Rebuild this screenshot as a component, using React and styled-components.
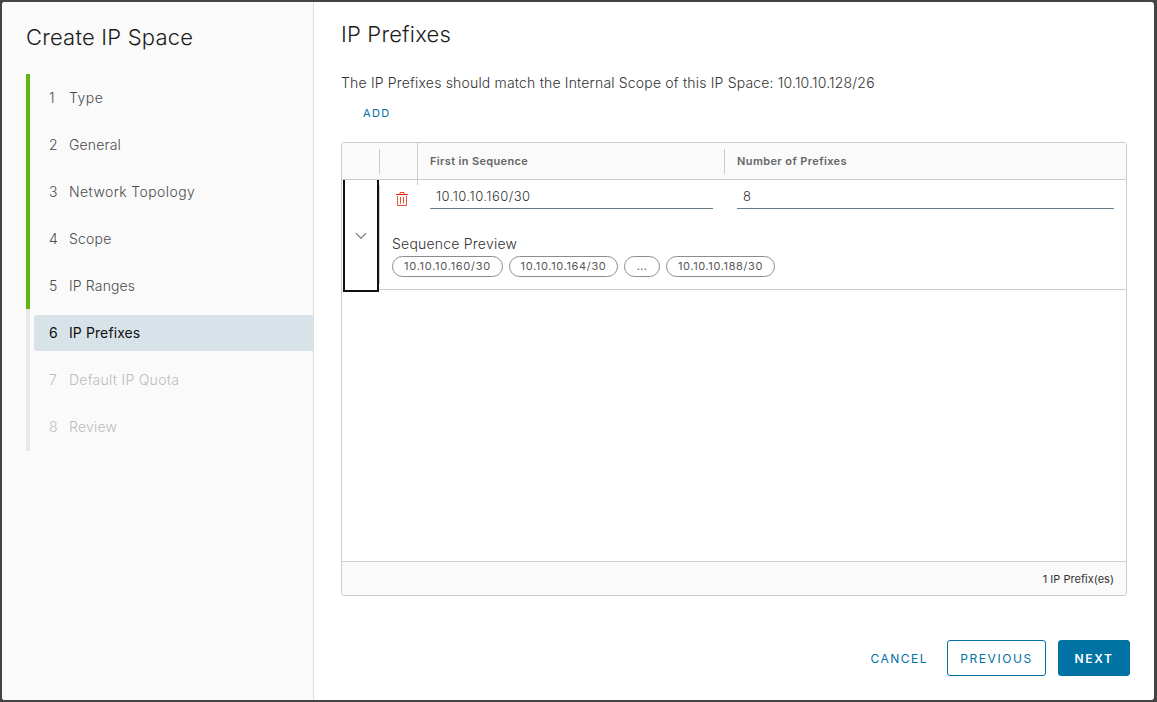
import React from 'react';
import styled, { createGlobalStyle } from 'styled-components';

const GlobalStyle = createGlobalStyle`
  *, *::before, *::after { box-sizing: border-box; }
  body { margin: 0; background: #454344; }
  #root { height: 100vh; }
`;

const Frame = styled.div`
  height: 702px;
  width: 1157px;
  padding: 2px 3px 2px 2px;
  background: #454344;
  font-family: Inter, 'Liberation Sans', sans-serif;
`;

const Wizard = styled.div`
  display: flex;
  height: 100%;
  background: #fff;
  border-radius: 3px;
  overflow: hidden;
`;

const Sidebar = styled.aside`
  width: 312px;
  flex: none;
  background: #fafafa;
  border-right: 1px solid #dedede;
  padding: 20px 0 0 24px;
`;

const Title = styled.h1`
  margin: 0;
  height: 30px;
  line-height: 30px;
  font-size: 22px;
  font-weight: 270;
  letter-spacing: 0.2px;
  color: #1b1b1b;
  white-space: nowrap;
`;

const Steps = styled.ol`
  list-style: none;
  margin: 22px 0 0;
  padding: 0;
`;

const Step = styled.li`
  height: ${(p) => (p.$last ? 48 : 47)}px;
  padding: 6px 0 0 4px;
  border-left: 4px solid ${(p) => (p.$state === 'done' ? '#60b515' : '#e8e8e8')};
`;

const stepColors = { done: '#4d4d4d', active: '#111', pending: '#bcbcbc' };

const StepLabel = styled.div`
  display: flex;
  align-items: center;
  height: 36px;
  padding: 0 0 2px 15px;
  border-radius: 3px 0 0 3px;
  background: ${(p) => (p.$state === 'active' ? '#d8e3e9' : 'transparent')};
  color: ${(p) => stepColors[p.$state]};
  font-size: 14px;
  font-weight: ${(p) => (p.$state === 'active' ? 400 : 350)};
  letter-spacing: ${(p) => p.$spacing}px;
  white-space: nowrap;
`;

const StepNumber = styled.span`
  width: 20px;
`;

const Main = styled.main`
  flex: 1;
  display: flex;
  flex-direction: column;
  padding: 17px 27px 0 27px;
`;

const Description = styled.p`
  margin: 24px 0 0;
  height: 20px;
  line-height: 20px;
  font-size: 14px;
  font-weight: 350;
  letter-spacing: 0.18px;
  color: #333;
  white-space: nowrap;
`;

const LinkButton = styled.button`
  border: 0;
  background: none;
  padding: 0;
  font: inherit;
  font-weight: 400;
  color: #0072a3;
`;

const AddButton = styled(LinkButton)`
  align-self: flex-start;
  margin: 12px 0 21px 22px;
  height: 16px;
  line-height: 16px;
  font-size: 11px;
  letter-spacing: 1.4px;
`;

const Grid = styled.section`
  display: flex;
  flex-direction: column;
  width: 786px;
  height: 454px;
  border: 1px solid #ccc;
  border-radius: 3px;
`;

const Header = styled.div`
  display: flex;
  height: 37px;
  flex: none;
  background: #fafafa;
  border-bottom: 1px solid #ccc;
  border-radius: 2px 2px 0 0;
`;

const HeaderCell = styled.div`
  display: flex;
  width: ${(p) => (p.$width ? `${p.$width}px` : 'auto')};
  flex: ${(p) => (p.$width ? 'none' : 1)};
  padding-left: 12px;
  align-items: center;
  font-size: 11px;
  font-weight: 600;
  letter-spacing: ${(p) => p.$spacing || 0}px;
  color: #666;
  white-space: nowrap;
`;

const Separator = styled.span`
  width: 1px;
  height: ${(p) => (p.$full ? 42 : 25)}px;
  flex: none;
  margin: ${(p) => (p.$full ? '0 0 -6px auto' : '6px 0 0 auto')};
  align-self: flex-start;
  background: #ccc;
`;

const Row = styled.div`
  display: flex;
  height: 110px;
  flex: none;
  border-bottom: 1px solid #ccc;
`;

const ExpandCell = styled.div`
  position: relative;
  display: flex;
  flex: none;
  align-items: center;
  justify-content: center;
  width: 36px;
  height: 112px;
  margin-left: 1px;
  padding-top: 2px;
  border: 2px solid #111;
  border-top: 0;
  background: #fff;
`;

const RowBody = styled.div`
  flex: 1;
  padding: 5px 12px 0 13px;
  position: relative;
`;

const ColumnRule = styled.span`
  position: absolute;
  left: 0;
  top: 5px;
  bottom: 5px;
  width: 1px;
  background: #ccc;
`;

const Fields = styled.div`
  display: flex;
  height: 24px;
`;

const DeleteButton = styled.button`
  display: flex;
  align-items: flex-start;
  width: 38px;
  padding: 6px 0 0 3px;
  border: 0;
  background: none;
`;

const Field = styled.div`
  width: ${(p) => p.$width}px;
  height: 24px;
  margin-right: ${(p) => p.$gap || 0}px;
  padding-left: 6px;
  line-height: 22px;
  border-bottom: 1px solid #667c89;
  font-size: 13px;
  font-weight: 350;
  letter-spacing: 0.47px;
  color: #333;
`;

const PreviewTitle = styled.div`
  margin-top: 25px;
  height: 20px;
  line-height: 20px;
  font-size: 14px;
  font-weight: 350;
  letter-spacing: 0.22px;
  color: #333;
`;

const Tags = styled.div`
  display: flex;
  gap: 6px;
  margin-top: 2px;
`;

const Tag = styled.span`
  display: flex;
  align-items: center;
  justify-content: center;
  width: ${(p) => p.$width}px;
  height: 21px;
  padding-bottom: 1px;
  border: 1px solid #8c8c8c;
  border-radius: 11px;
  font-size: 11px;
  font-weight: 370;
  letter-spacing: ${(p) => p.$spacing}px;
  color: #565656;
`;

const Footer = styled.div`
  display: flex;
  align-items: center;
  justify-content: flex-end;
  height: 34px;
  flex: none;
  margin-top: auto;
  padding-right: 12px;
  border-top: 1px solid #ccc;
  border-radius: 0 0 2px 2px;
  background: #fafafa;
  font-size: 11px;
  font-weight: 370;
  letter-spacing: 0.03px;
  color: #333;
`;

const Actions = styled.div`
  display: flex;
  justify-content: flex-end;
  gap: 12px;
  margin: 44px -3px 0 0;
  font-size: 12px;
  letter-spacing: 1.6px;
`;

const CancelButton = styled(LinkButton)`
  letter-spacing: 1.5px;
  margin-right: 7px;
`;

const Button = styled.button`
  width: ${(p) => p.$width}px;
  height: 36px;
  padding: 0;
  border: 1px solid #0072a3;
  border-radius: 3px;
  background: ${(p) => (p.$primary ? '#0072a3' : '#fff')};
  color: ${(p) => (p.$primary ? '#fff' : '#0072a3')};
  font: inherit;
  font-weight: ${(p) => (p.$primary ? 600 : 400)};
  letter-spacing: inherit;
`;

const steps = [
  ['Type', 'done', 0.5],
  ['General', 'done', 0.15],
  ['Network Topology', 'done', 0.4],
  ['Scope', 'done', 0.2],
  ['IP Ranges', 'done', 0.15],
  ['IP Prefixes', 'active', 0.1],
  ['Default IP Quota', 'pending', 0.27],
  ['Review', 'pending', 0.2],
];

const tags = [
  ['10.10.10.160/30', 111, 0.72],
  ['10.10.10.164/30', 109, 0.65],
  ['...', 36, 0.3],
  ['10.10.10.188/30', 109, 0.62],
];

const TrashIcon = () => (
  <svg width="14" height="16" viewBox="0 0 14 16" fill="none" stroke="#e62700">
    <path d="M1 3.500h12" strokeWidth="1.200" />
    <path d="M5 3V1.500h4V3" opacity="0.8" />
    <path d="M2.500 5v9.500h9V5M5.500 6v6.500M8.500 6v6.500" opacity="0.8" />
  </svg>
);

const ChevronIcon = () => (
  <svg width="12" height="8" viewBox="0 0 12 8" fill="none" stroke="#8c8c8c" strokeWidth="1.4">
    <path d="M1 1.200l5 5 5-5" />
  </svg>
);

export default function App() {
  return (
    <Frame>
      <GlobalStyle />
      <Wizard>
        <Sidebar>
          <Title>Create IP Space</Title>
          <Steps>
            {steps.map(([label, state, spacing], i) => (
              <Step key={label} $state={state} $last={i === steps.length - 1}>
                <StepLabel $state={state} $spacing={spacing}>
                  <StepNumber>{i + 1}</StepNumber>
                  <span>{label}</span>
                </StepLabel>
              </Step>
            ))}
          </Steps>
        </Sidebar>
        <Main>
          <Title>IP Prefixes</Title>
          <Description>
            The IP Prefixes should match the Internal Scope of this IP Space: 10.10.10.128/26
          </Description>
          <AddButton>ADD</AddButton>
          <Grid>
            <Header>
              <HeaderCell $width={38}><Separator /></HeaderCell>
              <HeaderCell $width={38}><Separator $full /></HeaderCell>
              <HeaderCell $width={307} $spacing={0.35}>
                First in Sequence
                <Separator />
              </HeaderCell>
              <HeaderCell $spacing={0.4}>Number of Prefixes</HeaderCell>
            </Header>
            <Row>
              <ExpandCell><ChevronIcon /></ExpandCell>
              <RowBody>
                <ColumnRule />
                <Fields>
                  <DeleteButton aria-label="Delete"><TrashIcon /></DeleteButton>
                  <Field $width={283} $gap={24}>10.10.10.160/30</Field>
                  <Field $width={377}>8</Field>
                </Fields>
                <PreviewTitle>Sequence Preview</PreviewTitle>
                <Tags>
                  {tags.map(([label, width, spacing]) => (
                    <Tag key={label} $width={width} $spacing={spacing}>{label}</Tag>
                  ))}
                </Tags>
              </RowBody>
            </Row>
            <Footer>1 IP Prefix(es)</Footer>
          </Grid>
          <Actions>
            <CancelButton>CANCEL</CancelButton>
            <Button $width={99}>PREVIOUS</Button>
            <Button $width={72} $primary>NEXT</Button>
          </Actions>
        </Main>
      </Wizard>
    </Frame>
  );
}
